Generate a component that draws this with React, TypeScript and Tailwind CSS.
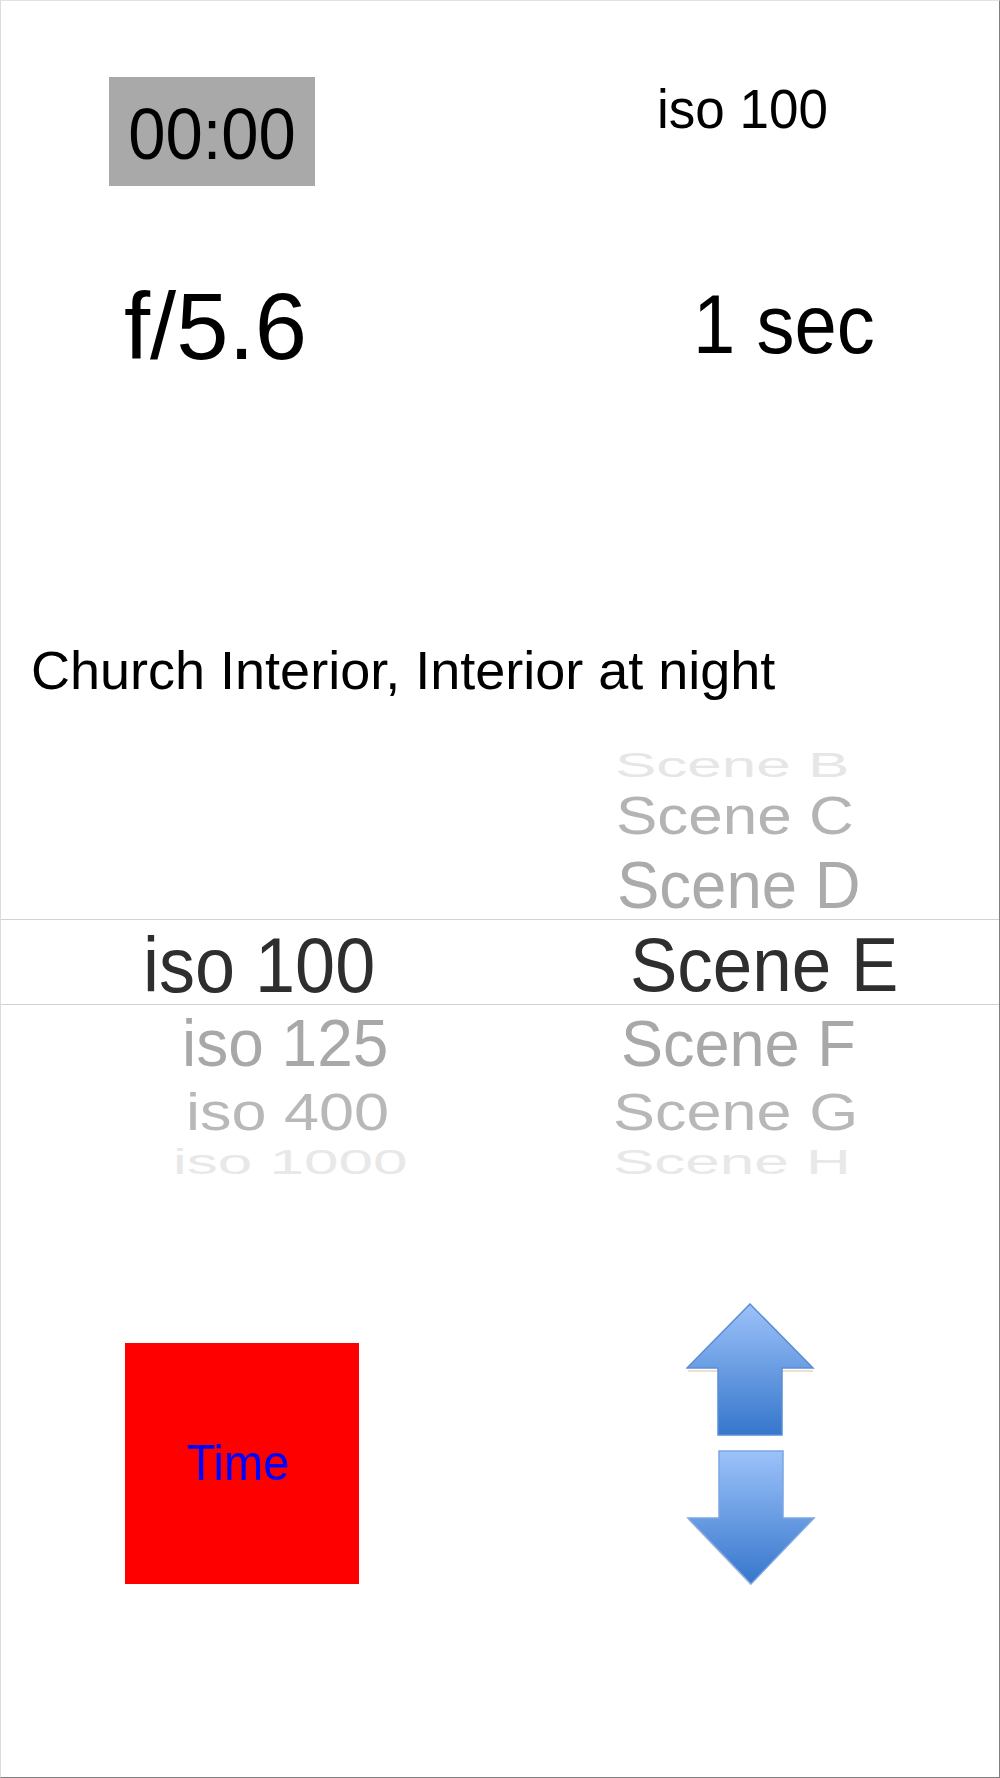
function ArrowUp() {
  return (
    <svg width="130" height="136" viewBox="0 0 130 136" className="block">
      <defs>
        <linearGradient id="upFill" x1="0" y1="0" x2="0" y2="1">
          <stop offset="0" stopColor="#9cc2f9" />
          <stop offset="1" stopColor="#3676cc" />
        </linearGradient>
      </defs>
      {/* faint warm edge under the wings */}
      <path d="M2 67 L32 67 L32 69 L2 69 Z M96 67 L127 67 L127 69 L96 69 Z" fill="#ecdfd2" />
      <path
        d="M64 1 L127 65 L96 65 L96 132 L32 132 L32 65 L1 65 Z"
        fill="url(#upFill)"
        stroke="#5a8dd6"
        strokeWidth="1.5"
      />
    </svg>
  );
}

function ArrowDown() {
  return (
    <svg width="130" height="136" viewBox="0 0 130 136" className="block">
      <defs>
        <linearGradient id="downFill" x1="0" y1="0" x2="0" y2="1">
          <stop offset="0" stopColor="#9cc2f9" />
          <stop offset="1" stopColor="#3676cc" />
        </linearGradient>
      </defs>
      <path d="M2 70 L65 136 L65 134 L4 70 Z" fill="#ecdfd2" />
      <path
        d="M33 1 L97 1 L97 68 L128 68 L65 134 L2 68 L33 68 Z"
        fill="url(#downFill)"
        stroke="#7ba6e2"
        strokeWidth="1.5"
      />
    </svg>
  );
}

export default function App() {
  return (
    <div className="flex h-[1778px] w-full flex-col overflow-hidden border-t border-r border-b border-l border-t-[#e2e2e2] border-r-[#808080] border-b-[#808080] border-l-[#dcdcdc] bg-white font-['Liberation_Sans',Arial,sans-serif] text-black">
      {/* readouts */}
      <div className="grid h-[185px] grid-cols-[499px_1fr]">
        <div className="pt-[76px] pl-[108px]">
          <div className="flex h-[109px] w-[206px] items-center justify-center bg-[#a9a9a9] text-[67px] leading-none">
            <span className="mt-[4px] scale-y-[1.08]">00:00</span>
          </div>
        </div>
        <div className="pt-[81px] pl-[157px]">
          <div className="scale-y-[1.06] text-[53px] leading-[54px]">iso 100</div>
        </div>
      </div>
      <div className="grid h-[214px] grid-cols-[499px_1fr]">
        <div className="pt-[88px] pl-[123px] text-[94px] leading-[106px]">f/5.6</div>
        <div className="pt-[93px] pl-[193px]">
          <div className="scale-y-[1.1] text-[76px] leading-[90px]">1 sec</div>
        </div>
      </div>

      {/* scene description */}
      <div className="mt-[235px] h-[70px] pl-[30px] text-[54px] leading-[70px]">
        Church Interior, Interior at night
      </div>

      {/* picker */}
      <div className="mt-[34px]">
        <div className="grid h-[180px] grid-cols-[499px_1fr]">
          <div />
          <div className="text-[62px] leading-[62px] text-[#ababab]">
            <div className="flex h-[52px] items-center pl-[115px]">
              <span className="scale-y-[0.58] text-[#e6e6e6]">Scene B</span>
            </div>
            <div className="flex h-[50px] items-center pl-[116px]">
              <span className="scale-y-[0.88] text-[#b4b4b4]">Scene C</span>
            </div>
            <div className="flex h-[78px] items-center pt-[9px] pl-[117px]">
              <span className="scale-y-[1.04] text-[63.5px]">Scene D</span>
            </div>
          </div>
        </div>
        <div className="grid h-[86px] grid-cols-[499px_1fr] border-y border-[#d2d2d2] leading-[84px] text-[#2e2e2e]">
          <div className="scale-y-[1.08] pt-[3px] pl-[142px] text-[72px]">iso 100</div>
          <div className="scale-y-[1.08] pt-[3px] pl-[130px] text-[71px]">Scene E</div>
        </div>
        <div className="grid grid-cols-[499px_1fr] text-[63px] leading-[62px]">
          <div>
            <div className="flex h-[76px] items-center pl-[181px] text-[#a8a8a8]">
              <span className="scale-y-[1.04] text-[64px]">iso 125</span>
            </div>
            <div className="flex h-[58px] items-center pt-[4px] pl-[185px] text-[#b8b8b8]">
              <span className="scale-y-[0.82]">iso 400</span>
            </div>
            <div className="flex h-[50px] items-center pb-[4px] pl-[172px] text-[#e8e8e8]">
              <span className="scale-y-[0.56] text-[62px]">iso 1000</span>
            </div>
          </div>
          <div>
            <div className="flex h-[76px] items-center pl-[121px] text-[#a8a8a8]">
              <span className="scale-y-[1.04]">Scene F</span>
            </div>
            <div className="flex h-[58px] items-center pt-[4px] pl-[113px] text-[#b8b8b8]">
              <span className="scale-y-[0.82]">Scene G</span>
            </div>
            <div className="flex h-[50px] items-center pb-[4px] pl-[113px] text-[#e8e8e8]">
              <span className="scale-y-[0.56] text-[62px]">Scene H</span>
            </div>
          </div>
        </div>
      </div>

      {/* controls */}
      <div className="mt-[114px] grid grid-cols-[499px_1fr]">
        <div className="pt-[40px] pl-[124px]">
          <button className="flex h-[241px] w-[234px] items-center justify-center bg-[#ff0000] pr-[8px] pb-[2px] text-[47px] leading-none text-[#0000ff]">
            <span className="scale-y-[1.06]">Time</span>
          </button>
        </div>
        <div className="flex flex-col pl-[186px]">
          <ArrowUp />
          <div className="mt-[11px]">
            <ArrowDown />
          </div>
        </div>
      </div>
    </div>
  );
}
